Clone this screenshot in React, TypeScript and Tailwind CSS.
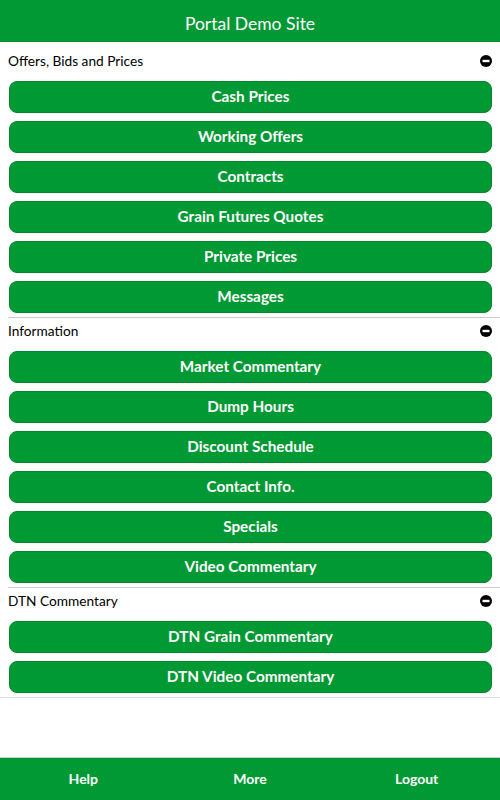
import React from 'react';

const sections = [
  {
    title: 'Offers, Bids and Prices',
    items: ['Cash Prices', 'Working Offers', 'Contracts', 'Grain Futures Quotes', 'Private Prices', 'Messages'],
  },
  {
    title: 'Information',
    items: ['Market Commentary', 'Dump Hours', 'Discount Schedule', 'Contact Info.', 'Specials', 'Video Commentary'],
  },
  {
    title: 'DTN Commentary',
    items: ['DTN Grain Commentary', 'DTN Video Commentary'],
  },
];

const MinusIcon = () => (
  <svg width="12" height="12" viewBox="0 0 12 12">
    <circle cx="6" cy="6" r="6" fill="#000" />
    <rect x="2.5" y="4.8" width="7" height="2.4" fill="#fff" />
  </svg>
);

export default function App() {
  return (
    <div className="w-[500px] h-[800px] flex flex-col bg-white font-['Lato','Liberation_Sans',sans-serif]">
      <header className="h-[42px] shrink-0 bg-[#009933] flex items-center justify-center pt-[6px] text-white text-[17.5px]">
        Portal Demo Site
      </header>

      <main className="flex-1 pt-[6px]">
        {sections.map((s, i) => (
          <section
            key={s.title}
            className={`pb-[4px] border-b ${i === sections.length - 1 ? 'border-[#dddddd]' : 'ml-[8px] border-[#cccccc]'}`}
          >
            <div className={`h-[26px] flex items-center justify-between pr-[8px] text-[13.7px] text-black ${i === sections.length - 1 ? 'pl-[8px]' : ''}`}>
              <span>{s.title}</span>
              <MinusIcon />
            </div>
            <div className={`flex flex-col gap-[8px] mt-[7px] ${i === sections.length - 1 ? 'pl-[9px]' : 'pl-[1px]'} pr-[8px]`}>
              {s.items.map((item) => (
                <button
                  key={item}
                  className="h-[32px] w-full rounded-[8px] bg-[#009933] border border-[#008a2c] pb-[1px] text-white font-bold text-[15.3px]"
                >
                  {item}
                </button>
              ))}
            </div>
          </section>
        ))}
      </main>

      <footer className="h-[43px] shrink-0 border-t border-[#cccccc] bg-[#009933] grid grid-cols-3 items-center pb-[2px] text-white font-bold text-[14px]">
        <span className="text-center">Help</span>
        <span className="text-center">More</span>
        <span className="text-center">Logout</span>
      </footer>
    </div>
  );
}
